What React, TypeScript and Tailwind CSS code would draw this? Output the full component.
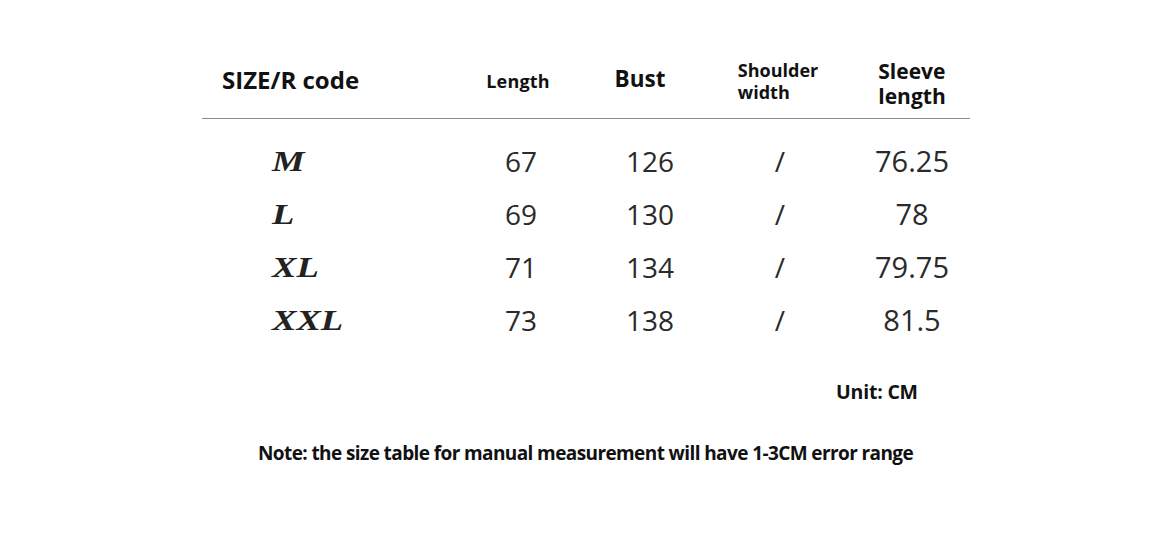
import React from "react";

const rows = [
  { size: "M", length: "67", bust: "126", shoulder: "/", sleeve: "76.25" },
  { size: "L", length: "69", bust: "130", shoulder: "/", sleeve: "78" },
  { size: "XL", length: "71", bust: "134", shoulder: "/", sleeve: "79.75" },
  { size: "XXL", length: "73", bust: "138", shoulder: "/", sleeve: "81.5" },
];

const sans = "font-['Open_Sans','Noto_Sans',sans-serif]";

export default function App() {
  return (
    <div className="w-[1170px] h-[555px] bg-white text-[#1a1a1a] overflow-hidden">
      <div className="pt-[55px] pl-[202px]">
        <div className={`grid grid-cols-[258px_122px_136px_124px_140px] h-[52px] items-center ${sans} font-bold text-[#111]`}>
          <div className="pl-[20px] text-[24px] leading-none -mt-[5px]">SIZE/R code</div>
          <div className="text-center text-[18px] tracking-[0.2px] leading-none -mt-[3px] pr-[6px]">Length</div>
          <div className="text-center text-[22.5px] leading-none -mt-[5px] pr-[20px]">Bust</div>
          <div className="flex justify-center">
            <div className="text-left text-[18px] leading-[22px] -mt-[2px] pr-[4px]">
              Shoulder
              <br />
              width
            </div>
          </div>
          <div className="flex justify-center">
            <div className="flex flex-col text-left text-[21px] leading-[25px] mt-[4px]">
              <span>Sleeve</span>
              <span>length</span>
            </div>
          </div>
        </div>
        <div className="w-[768px] h-px bg-[#8a8a8a] mt-[11px]" />
        <div className="mt-[15px]">
          {rows.map((r) => (
            <div
              key={r.size}
              className="grid grid-cols-[258px_122px_136px_124px_140px] h-[53px] items-center"
            >
              <div className="pl-[70px]">
                <div className="inline-block origin-left scale-x-[1.22] mt-[1px] font-['Liberation_Serif','Times_New_Roman',serif] font-bold italic text-[30px] leading-none text-[#222]">
                  {r.size}
                </div>
              </div>
              <div className={`text-center ${sans} text-[28px] leading-none text-[#2a2a2a]`}>{r.length}</div>
              <div className={`text-center ${sans} text-[28px] leading-none text-[#2a2a2a]`}>{r.bust}</div>
              <div className={`text-center ${sans} text-[28px] leading-none text-[#2a2a2a]`}>{r.shoulder}</div>
              <div className={`text-center ${sans} text-[29px] leading-none text-[#2a2a2a]`}>{r.sleeve}</div>
            </div>
          ))}
        </div>
      </div>
      <div className={`mt-[34px] pl-[836px] ${sans} font-bold text-[19.5px] leading-[24px] tracking-[-0.2px] text-[#111]`}>
        Unit: CM
      </div>
      <div className={`mt-[37px] pl-[258px] ${sans} font-bold text-[19px] leading-[24px] tracking-[-0.6px] text-[#111]`}>
        Note: the size table for manual measurement will have 1-3CM error range
      </div>
    </div>
  );
}
